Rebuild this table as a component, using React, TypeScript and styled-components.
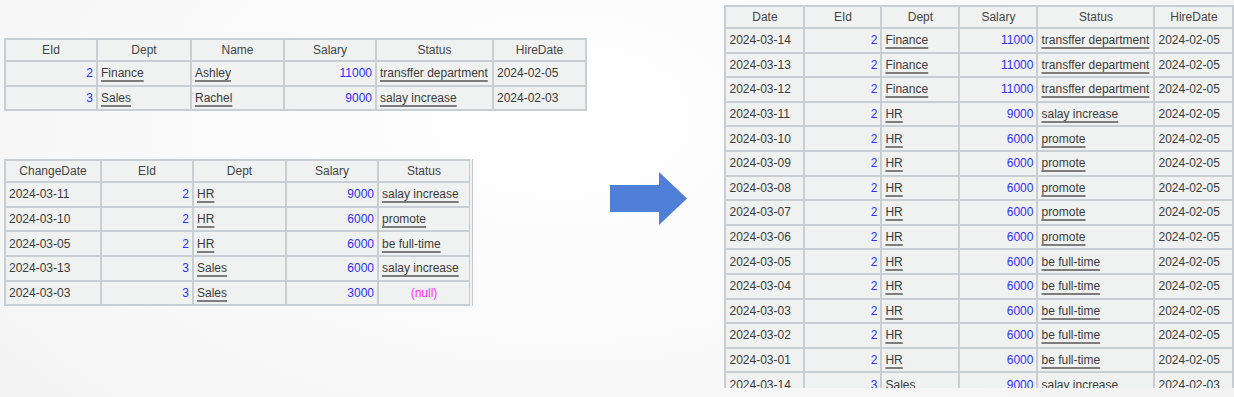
import React from "react";
import styled, { createGlobalStyle } from "styled-components";

const GlobalStyle = createGlobalStyle`
  html, body {
    margin: 0;
    padding: 0;
  }
  body {
    width: 1234px;
    height: 397px;
    overflow: hidden;
    font-family: "Liberation Sans", Arial, sans-serif;
    background: radial-gradient(ellipse 700px 420px at 560px 120px, #ffffff 0%, #fafafa 55%, #f4f4f4 100%);
  }
`;

const Page = styled.div`
  display: flex;
  align-items: flex-start;
  height: 397px;
`;

const LeftColumn = styled.div`
  display: flex;
  flex-direction: column;
  padding: 38px 0 0 4px;
  gap: 48px;
  width: 607px;
`;

const ArrowBox = styled.div`
  margin-top: 172px;
  width: 78px;
  height: 53px;
`;

const RightPanel = styled.div`
  margin: 5px 0 0 36px;
  height: 383px;
  overflow: hidden;
`;

const Table = styled.table<{ $width: number; $edge?: boolean }>`
  border-collapse: collapse;
  table-layout: fixed;
  width: ${(p) => p.$width}px;
  font-size: 12px;
  color: #3a3a3a;
  background: #f0f2f2;
  border: 2px solid #c3c9cc;
  ${(p) => (p.$edge ? "border-right: 4px double #c3c9cc;" : "")}
`;

const HeadCell = styled.th`
  font-weight: normal;
  height: 20px;
  padding: 0 4px;
  text-align: center;
  color: #444;
  border: 2px solid #c8ced1;
  white-space: nowrap;
`;

const Cell = styled.td<{ $align?: "left" | "right" | "center" }>`
  height: 22.6px;
  padding: 0 3px 0 3px;
  text-align: ${(p) => p.$align || "left"};
  border: 2px solid #c8ced1;
  white-space: nowrap;
  overflow: hidden;
`;

const Num = styled.span`
  color: #2f2fff;
`;

const Link = styled.span`
  text-decoration: underline;
  text-decoration-color: #7d7d7d;
  text-decoration-thickness: 2px;
  text-underline-offset: 3px;
`;

const Null = styled.span`
  color: #ff2bff;
`;

type Kind = "text" | "num" | "link";
type Col = { title: string; width: number; kind: Kind };

const renderCell = (value: string, kind: Kind, key: number) => {
  if (value === "(null)")
    return (
      <Cell key={key} $align="center">
        <Null>(null)</Null>
      </Cell>
    );
  if (kind === "num")
    return (
      <Cell key={key} $align="right">
        <Num>{value}</Num>
      </Cell>
    );
  if (kind === "link")
    return (
      <Cell key={key}>
        <Link>{value}</Link>
      </Cell>
    );
  return <Cell key={key}>{value}</Cell>;
};

const DataTable: React.FC<{
  cols: Col[];
  rows: string[][];
  edge?: boolean;
}> = ({ cols, rows, edge }) => {
  const width = cols.reduce((s, c) => s + c.width, 0);
  return (
    <Table $width={width} $edge={edge}>
      <colgroup>
        {cols.map((c) => (
          <col key={c.title} style={{ width: c.width }} />
        ))}
      </colgroup>
      <thead>
        <tr>
          {cols.map((c) => (
            <HeadCell key={c.title}>{c.title}</HeadCell>
          ))}
        </tr>
      </thead>
      <tbody>
        {rows.map((r, i) => (
          <tr key={i}>{r.map((v, j) => renderCell(v, cols[j].kind, j))}</tr>
        ))}
      </tbody>
    </Table>
  );
};

const employeeCols: Col[] = [
  { title: "EId", width: 92, kind: "num" },
  { title: "Dept", width: 94, kind: "link" },
  { title: "Name", width: 93, kind: "link" },
  { title: "Salary", width: 92, kind: "num" },
  { title: "Status", width: 117, kind: "link" },
  { title: "HireDate", width: 93, kind: "text" },
];

const employeeRows = [
  ["2", "Finance", "Ashley", "11000", "transffer department", "2024-02-05"],
  ["3", "Sales", "Rachel", "9000", "salay increase", "2024-02-03"],
];

const changeCols: Col[] = [
  { title: "ChangeDate", width: 96, kind: "text" },
  { title: "EId", width: 92, kind: "num" },
  { title: "Dept", width: 93, kind: "link" },
  { title: "Salary", width: 92, kind: "num" },
  { title: "Status", width: 93, kind: "link" },
];

const changeRows = [
  ["2024-03-11", "2", "HR", "9000", "salay increase"],
  ["2024-03-10", "2", "HR", "6000", "promote"],
  ["2024-03-05", "2", "HR", "6000", "be full-time"],
  ["2024-03-13", "3", "Sales", "6000", "salay increase"],
  ["2024-03-03", "3", "Sales", "3000", "(null)"],
];

const resultCols: Col[] = [
  { title: "Date", width: 79, kind: "text" },
  { title: "EId", width: 77, kind: "num" },
  { title: "Dept", width: 78, kind: "link" },
  { title: "Salary", width: 78, kind: "num" },
  { title: "Status", width: 117, kind: "link" },
  { title: "HireDate", width: 79, kind: "text" },
];

const fin = ["2", "Finance", "11000", "transffer department", "2024-02-05"];
const resultRows = [
  ["2024-03-14", ...fin],
  ["2024-03-13", ...fin],
  ["2024-03-12", ...fin],
  ["2024-03-11", "2", "HR", "9000", "salay increase", "2024-02-05"],
  ...["10", "09", "08", "07", "06"].map((d) => [
    `2024-03-${d}`,
    "2",
    "HR",
    "6000",
    "promote",
    "2024-02-05",
  ]),
  ...["05", "04", "03", "02", "01"].map((d) => [
    `2024-03-${d}`,
    "2",
    "HR",
    "6000",
    "be full-time",
    "2024-02-05",
  ]),
  ["2024-03-14", "3", "Sales", "9000", "salay increase", "2024-02-03"],
];

const Arrow = () => (
  <svg width="78" height="53" viewBox="0 0 78 53">
    <polygon points="0,13 49,13 49,0 77,26.5 49,53 49,40 0,40" fill="#4f7fd6" />
  </svg>
);

export default function App() {
  return (
    <>
      <GlobalStyle />
      <Page>
        <LeftColumn>
          <DataTable cols={employeeCols} rows={employeeRows} />
          <DataTable cols={changeCols} rows={changeRows} edge />
        </LeftColumn>
        <ArrowBox>
          <Arrow />
        </ArrowBox>
        <RightPanel>
          <DataTable cols={resultCols} rows={resultRows} />
        </RightPanel>
      </Page>
    </>
  );
}
